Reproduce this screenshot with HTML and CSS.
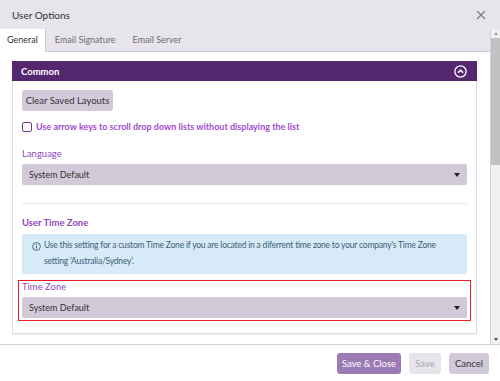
FILE: index.html
```html
<!DOCTYPE html>
<html lang="en">
<head>
    <meta charset="UTF-8">
    <meta name="viewport" content="width=device-width, initial-scale=1.0">
    <title>User Options</title>
    <link rel="stylesheet" href="styles.css">
</head>
<body>

<div class="dialog">
    <div class="dlg-head">
        <span class="dlg-title">User Options</span>
        <span class="dlg-close">
            <svg width="10" height="10" viewBox="0 0 10 10"><path d="M1 1L9 9M9 1L1 9" stroke="#7a7a7a" stroke-width="1.1"/></svg>
        </span>
    </div>

    <div class="dlg-body">
        <div class="scroll-area">
            <div class="tabs">
                <span class="tab active">General</span>
                <span class="tab">Email Signature</span>
                <span class="tab">Email Server</span>
            </div>

            <div class="tab-panel">
                <div class="card">
                    <div class="card-head">
                        <span>Common</span>
                        <svg width="13" height="13" viewBox="0 0 13 13"><circle cx="6.5" cy="6.5" r="5.6" fill="none" stroke="#fff" stroke-width="1.3"/><path d="M3.9 7.8L6.5 5.2L9.1 7.8" fill="none" stroke="#fff" stroke-width="1.6"/></svg>
                    </div>
                    <div class="card-body">
                        <button type="button" class="btn-grey">Clear Saved Layouts</button>

                        <label class="check-row">
                            <span class="checkbox"></span>
                            Use arrow keys to scroll drop down lists without displaying the list
                        </label>

                        <div class="field-label">Language</div>
                        <div class="select">
                            <span>System Default</span>
                            <span class="caret"></span>
                        </div>

                        <hr class="divider">

                        <div class="section-label">User Time Zone</div>
                        <div class="info">
                            <svg width="9" height="9" viewBox="0 0 9 9"><circle cx="4.5" cy="4.5" r="3.9" fill="none" stroke="#3d5f78" stroke-width="0.9"/><path d="M4.5 3.8V6.7" stroke="#3d5f78" stroke-width="1"/><circle cx="4.5" cy="2.5" r="0.6" fill="#3d5f78"/></svg>
                            <p>Use this setting for a custom Time Zone if you are located in a diferrent time zone to your company's Time Zone setting 'Australia/Sydney'.</p>
                        </div>

                        <div class="highlight">
                            <div class="field-label">Time Zone</div>
                            <div class="select">
                                <span>System Default</span>
                                <span class="caret"></span>
                            </div>
                        </div>
                    </div>
                </div>
            </div>
        </div>

        <div class="scrollbar">
            <span class="sb-arrow up"></span>
            <span class="sb-thumb"></span>
            <span class="sb-track"></span>
            <span class="sb-arrow down"></span>
        </div>
    </div>

    <div class="dlg-foot">
        <button type="button" class="btn-primary">Save &amp; Close</button>
        <button type="button" class="btn-disabled">Save</button>
        <button type="button" class="btn-grey">Cancel</button>
    </div>
</div>

</body>
</html>
```

FILE: styles.css
```css
body {
    margin: 0;
    padding: 0;
    font-family: Lato, 'Noto Sans', sans-serif;
    background-color: #ffffff;
    color: #333333;
}
.dialog {
    width: 500px;
    height: 381px;
    display: flex;
    flex-direction: column;
}
.dlg-head {
    height: 29px;
    background-color: #e7e4eb;
    display: flex;
    align-items: center;
    justify-content: space-between;
    padding: 0 14px 0 12px;
}
.dlg-title {
    font-size: 10px;
    color: #333333;
}
.dlg-close {
    display: flex;
}
.dlg-body {
    height: 315px;
    display: flex;
    border-bottom: 1px solid #d3ccda;
}
.scroll-area {
    flex: 1;
    overflow: hidden;
}
.tabs {
    height: 22px;
    background-color: #e7e4eb;
    border-bottom: 1px solid #cfc7d8;
    display: flex;
}
.tab {
    font-size: 9px;
    color: #6f6f6f;
    padding: 0 8px 0 9px;
    line-height: 22px;
}
.tab.active {
    background-color: #ffffff;
    color: #333333;
    padding: 0 7px;
    height: 23px;
    border-right: 1px solid #cfc7d8;
}
.tab-panel {
    padding: 9px 13px 0 12px;
}
.card {
    border: 1px solid #e1dde6;
    border-top: none;
    box-shadow: 0 1px 1px rgba(0, 0, 0, 0.05);
}
.card-head {
    height: 20px;
    background-color: #55276f;
    color: #ffffff;
    font-size: 9.5px;
    font-weight: bold;
    display: flex;
    align-items: center;
    justify-content: space-between;
    padding: 0 10px 0 9px;
    margin: 0 -1px;
}
.card-body {
    padding: 9px 9px 12px 9px;
}
.btn-grey,
.btn-primary,
.btn-disabled {
    font-family: inherit;
    font-size: 9.5px;
    border: none;
    border-radius: 3px;
    height: 21px;
    padding: 0 8px;
    cursor: pointer;
    display: block;
}
.btn-grey {
    background-color: #d3cad9;
    color: #333333;
}
.card-body .btn-grey {
    width: 91px;
    padding: 0;
}
.check-row {
    display: flex;
    align-items: center;
    gap: 4px;
    margin-top: 11px;
    font-size: 9px;
    font-weight: bold;
    color: #a34ad3;
    line-height: 10px;
}
.checkbox {
    width: 8px;
    height: 8px;
    border: 1px solid #6c3d8a;
    border-radius: 2px;
    background-color: #ffffff;
}
.field-label {
    font-size: 9.5px;
    color: #8f47bd;
    line-height: 12px;
    margin-bottom: 4px;
}
.card-body > .field-label {
    margin-top: 16px;
}
.select {
    height: 21px;
    background-color: #d3cad9;
    border-radius: 2px;
    display: flex;
    align-items: center;
    justify-content: space-between;
    padding: 0 7px;
    font-size: 9px;
    color: #333333;
}
.caret {
    width: 0;
    height: 0;
    border-left: 3px solid transparent;
    border-right: 3px solid transparent;
    border-top: 4px solid #222222;
}
.divider {
    border: none;
    border-top: 1px solid #e6e3ea;
    margin: 18px 0 0 0;
}
.section-label {
    font-size: 9.5px;
    font-weight: bold;
    color: #8f47bd;
    line-height: 12px;
    margin-top: 13px;
}
.info {
    margin-top: 5px;
    background-color: #d6eaf7;
    border-radius: 2px;
    padding: 7px 10px 5px 10px;
    display: flex;
    gap: 3px;
    color: #3d5f78;
    font-size: 8.5px;
    letter-spacing: -0.2px;
}
.info svg {
    margin-top: 1px;
    flex-shrink: 0;
}
.info p {
    margin: 0;
    line-height: 16px;
    margin-top: -4px;
}
.highlight {
    margin: 6px -4px 0 -4px;
    border: 1px solid #e81d25;
    padding: 0 3px 2px 3px;
}
.highlight .field-label {
    margin-bottom: 4px;
}
.scrollbar {
    width: 9px;
    border-left: 1px solid #d6cfdc;
    background-color: #f1f1f1;
    display: flex;
    flex-direction: column;
    align-items: center;
}
.sb-arrow {
    width: 0;
    height: 0;
    border-left: 2.5px solid transparent;
    border-right: 2.5px solid transparent;
    margin: 3px 0;
}
.sb-arrow.up {
    border-bottom: 3px solid #a3a3a3;
}
.sb-arrow.down {
    border-top: 3px solid #505050;
}
.sb-thumb {
    width: 9px;
    height: 127px;
    background-color: #c1c1c1;
}
.sb-track {
    flex: 1;
}
.dlg-foot {
    flex: 1;
    display: flex;
    justify-content: flex-end;
    align-items: center;
    gap: 8px;
    padding: 0 11px 0 0;
}
.btn-primary {
    background-color: #9c7ab6;
    color: #ffffff;
    width: 64px;
    padding: 0;
}
.btn-disabled {
    background-color: #e7e4eb;
    color: #a9a4ae;
    width: 32px;
    padding: 0;
}
.dlg-foot .btn-grey {
    width: 40px;
    padding: 0;
}
```
